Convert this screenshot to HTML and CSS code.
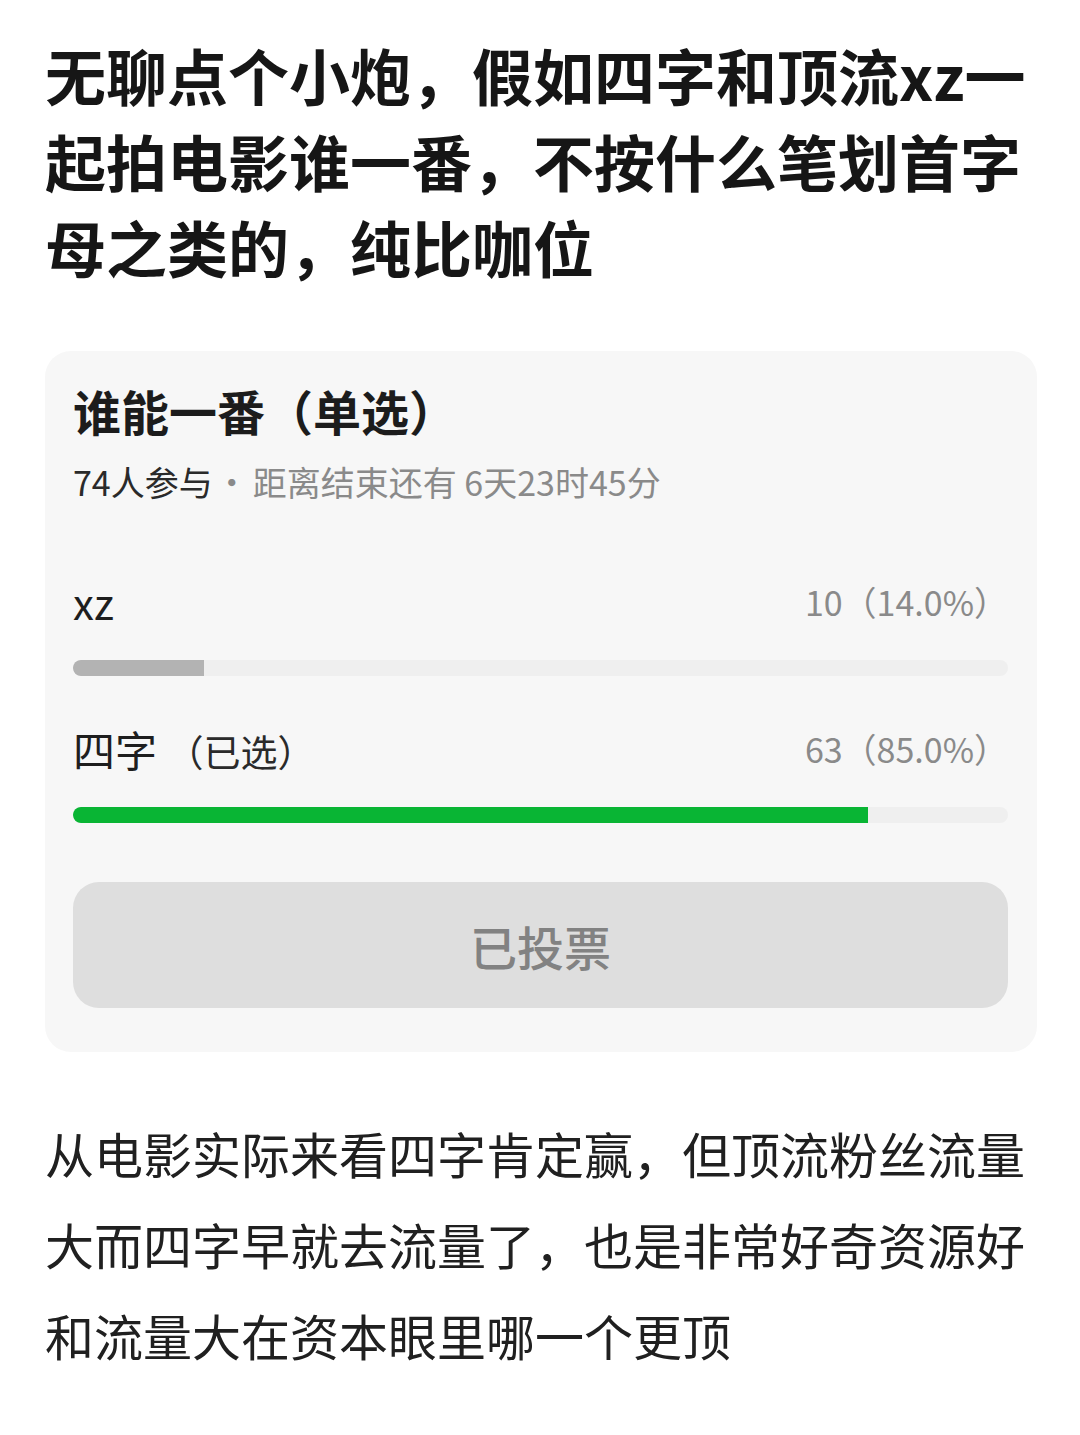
FILE: index.html
```html
<!DOCTYPE html>
<html lang="zh-CN">
<head>
<meta charset="utf-8">
<link rel="stylesheet" href="styles.css">
</head>
<body>
<div class="page">
  <h1 class="title">无聊点个小炮，假如四字和顶流xz一起拍电影谁一番，不按什么笔划首字母之类的，纯比咖位</h1>
  <section class="poll">
    <div class="poll-title">谁能一番（单选）</div>
    <div class="poll-meta"><span class="count">74人参与</span><span class="dot">·</span>距离结束还有 6天23时45分</div>
    <div class="option">
      <div class="option-row">
        <span class="label">xz</span>
        <span class="value">10（14.0%）</span>
      </div>
      <div class="bar"><div class="fill" style="width:14%"></div></div>
    </div>
    <div class="option">
      <div class="option-row">
        <span class="label">四字 <span class="chosen">（已选）</span></span>
        <span class="value">63（85.0%）</span>
      </div>
      <div class="bar"><div class="fill fill-green" style="width:85%"></div></div>
    </div>
    <div class="voted">已投票</div>
  </section>
  <p class="body-text">从电影实际来看四字肯定赢，但顶流粉丝流量大而四字早就去流量了，也是非常好奇资源好和流量大在资本眼里哪一个更顶</p>
</div>
</body>
</html>
```

FILE: styles.css
```css
html, body {
  margin: 0;
  padding: 0;
  background: #ffffff;
}
body {
  font-family: "Noto Sans CJK SC", "Noto Sans", sans-serif;
  color: #1a1a1a;
}
.page {
  width: 992px;
  padding: 32px 0 0 45px;
}
.title {
  margin: 0;
  font-size: 61px;
  line-height: 86px;
  font-weight: 700;
  color: #161616;
}
.poll {
  margin-top: 61px;
  background: #f7f7f7;
  border-radius: 26px;
  padding: 29px 29px 44px 28px;
}
.poll-title {
  font-size: 48px;
  line-height: 60px;
  font-weight: 700;
  color: #1c1c1c;
}
.poll-meta {
  margin-top: 20px;
  font-size: 34px;
  line-height: 44px;
  color: #8a8a8a;
}
.count {
  color: #2a2a2a;
}
.dot {
  margin: 0 4px 0 2px;
}
.option {
  margin-top: 72px;
}
.option + .option {
  margin-top: 47px;
}
.option-row {
  display: flex;
  justify-content: space-between;
  align-items: center;
  height: 50px;
}
.label {
  font-size: 42px;
  color: #1e1e1e;
}
.chosen {
  font-size: 37px;
  color: #2a2a2a;
}
.value {
  font-size: 34px;
  color: #8a8a8a;
}
.bar {
  margin-top: 34px;
  height: 16px;
  background: #efefef;
  border-radius: 8px;
  overflow: hidden;
}
.fill {
  height: 100%;
  background: #b3b3b3;
  border-radius: 6px 0 0 6px;
}
.fill-green {
  background: #09b534;
}
.voted {
  margin-top: 59px;
  height: 126px;
  border-radius: 26px;
  background: #dedede;
  display: flex;
  align-items: center;
  justify-content: center;
  font-size: 47px;
  font-weight: 500;
  color: #828282;
}
.body-text {
  margin: 55px 0 0 0;
  font-size: 49px;
  line-height: 91px;
  color: #202020;
}
```
